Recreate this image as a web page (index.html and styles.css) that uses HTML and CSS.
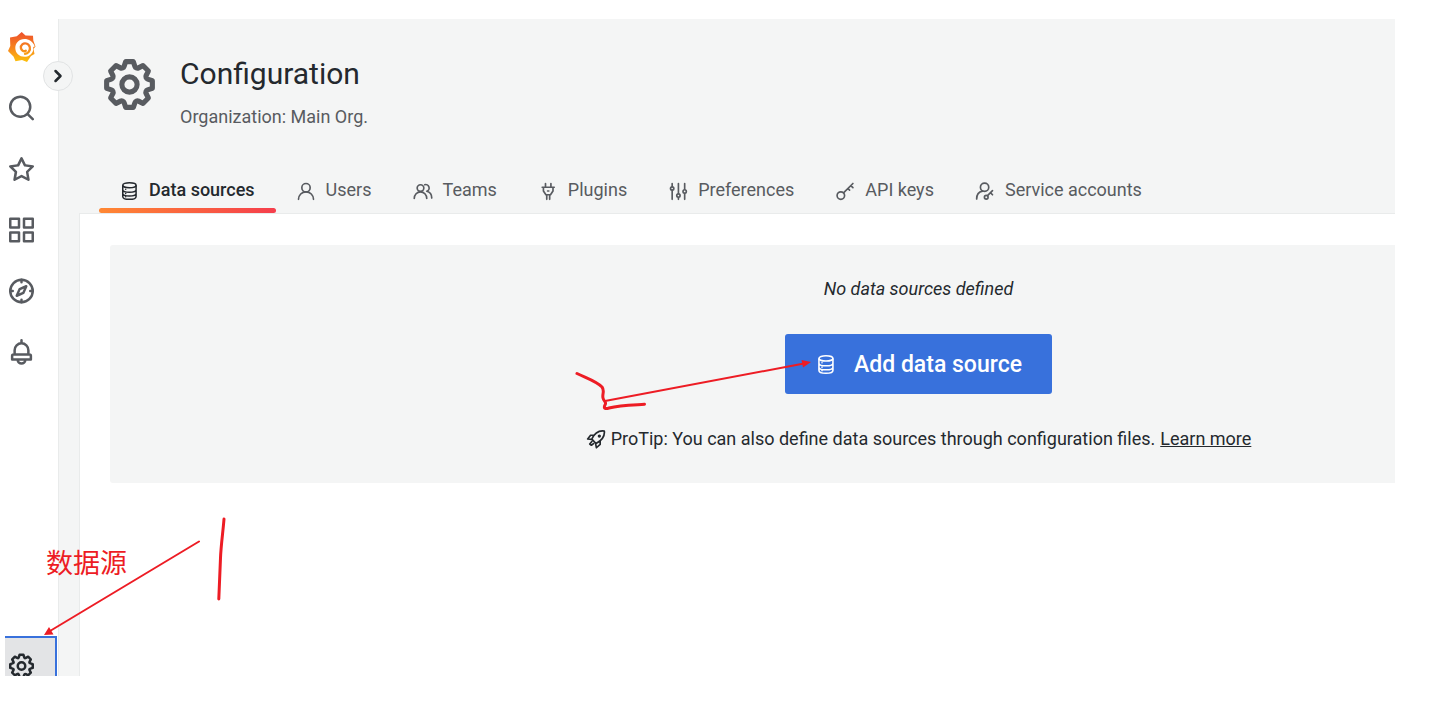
FILE: index.html
```html
<!DOCTYPE html>
<html lang="en">
<head>
<meta charset="utf-8" />
<title>Configuration: Data sources - Grafana</title>
<meta name="viewport" content="width=device-width, initial-scale=1" />
<link rel="stylesheet" href="styles.css">
</head>

<body>
<!-- shared icons -->
<svg class="sprite" aria-hidden="true">
    <symbol id="cog" viewBox="0 0 24 24"><path d="M21.32,9.55l-1.89-.63.89-1.78A1,1,0,0,0,20.13,6L18,3.87a1,1,0,0,0-1.15-.19l-1.78.89-.63-1.89A1,1,0,0,0,13.5,2h-3a1,1,0,0,0-.95.68L8.92,4.57,7.14,3.68A1,1,0,0,0,6,3.87L3.87,6a1,1,0,0,0-.19,1.15l.89,1.78-1.89.63A1,1,0,0,0,2,10.5v3a1,1,0,0,0,.68.95l1.89.63-.89,1.78A1,1,0,0,0,3.87,18L6,20.13a1,1,0,0,0,1.15.19l1.78-.89.63,1.89a1,1,0,0,0,.95.68h3a1,1,0,0,0,.95-.68l.63-1.89,1.78.89A1,1,0,0,0,18,20.13L20.13,18a1,1,0,0,0,.19-1.15l-.89-1.78,1.89-.63A1,1,0,0,0,22,13.5v-3A1,1,0,0,0,21.32,9.55ZM20,12.78l-1.2.4A2,2,0,0,0,17.64,16l.57,1.14-1.1,1.1L16,17.64a2,2,0,0,0-2.79,1.16l-.4,1.2H11.22l-.4-1.2A2,2,0,0,0,8,17.64l-1.14.57-1.1-1.1L6.36,16A2,2,0,0,0,5.2,13.18L4,12.78V11.22l1.2-.4A2,2,0,0,0,6.36,8L5.79,6.89l1.1-1.1L8,6.36A2,2,0,0,0,10.82,5.2l.4-1.2h1.56l.4,1.2A2,2,0,0,0,16,6.36l1.14-.57,1.1,1.1L17.64,8a2,2,0,0,0,1.16,2.79l1.2.4ZM12,8a4,4,0,1,0,4,4A4,4,0,0,0,12,8Zm0,6a2,2,0,1,1,2-2A2,2,0,0,1,12,14Z"/></symbol>
    <symbol id="database" viewBox="0 0 24 24">
        <g fill="none" stroke="currentColor" stroke-width="1.8"><ellipse cx="12.500" cy="5" rx="8" ry="3"/><path d="M4.500 5V18.500C4.500 20.500 8 22 12.500 22S20.500 20.500 20.500 18.500V5M4.500 10.500C4.500 12.300 8 13.500 12.500 13.500S20.500 12.300 20.500 10.500M4.500 15C4.500 16.800 8 18 12.500 18S20.500 16.800 20.500 15"/></g>
        <circle cx="8" cy="10" r=".9"/><circle cx="8" cy="15" r=".9"/><circle cx="8" cy="19" r=".9"/>
    </symbol>
</svg>

<div class="app">
    <nav class="sidebar" aria-label="Main menu">
        <a class="logo" href="#" aria-label="Home">
            <svg viewBox="0 0 30 32" width="30" height="32">
                <defs><linearGradient id="flame" gradientUnits="userSpaceOnUse" x1="0" y1="31" x2="0" y2="1"><stop offset="0" stop-color="#fcc10b"/><stop offset=".45" stop-color="#f7871e"/><stop offset="1" stop-color="#ee4f2c"/></linearGradient></defs>
                <path fill="url(#flame)" d="M15.700 1L19.500 4.500L27 4.800L27.300 9.500L29.500 15.500L27.500 18L28.500 23L25 25L21 31L16 29L9.500 30.300L7.500 25.500L2 20L4.300 15L4 6.500L10.800 5.300Z"/>
                <path fill="#fff" d="M28.800 15.500C26.500 10 22.800 8 18.500 8C13 8 9.300 12 9.300 17C9.300 22 13.200 25.800 18.500 25.800C22.500 25.800 25.500 23.500 26.800 20.500C27.300 19 27.400 17.500 27.200 16Z"/>
                <path fill="none" stroke="url(#flame)" stroke-width="2.300" stroke-linecap="round" d="M19.800 19.800C17.600 21 15.200 19.400 14.900 17C14.500 14 17.300 11.800 20.200 12.500C24 13.400 25 18 22.800 20.800C21.800 22 20.500 22.700 19 22.900"/>
            </svg>
        </a>
        <a class="nav-item" href="#" aria-label="Search dashboards"><svg class="icon" viewBox="0 0 24 24"><path d="M21.710,20.290,18,16.610A9,9,0,1,0,16.610,18l3.680,3.680a1,1,0,0,0,1.420,0A1,1,0,0,0,21.710,20.290ZM11,18a7,7,0,1,1,7-7A7,7,0,0,1,11,18Z"/></svg></a>
        <a class="nav-item" href="#" aria-label="Starred"><svg class="icon" viewBox="0 0 24 24"><path d="M22,9.670A1,1,0,0,0,21.140,9l-5.690-.830L12.900,3a1,1,0,0,0-1.800,0L8.550,8.160,2.860,9a1,1,0,0,0-.810.680,1,1,0,0,0,.250,1l4.130,4-1,5.680A1,1,0,0,0,6.900,21.440L12,18.770l5.100,2.670a.930.930,0,0,0,.460.120,1,1,0,0,0,.590-.190,1,1,0,0,0,.400-1l-1-5.680,4.130-4A1,1,0,0,0,22,9.670Zm-6.150,4a1,1,0,0,0-.290.880l.720,4.200-3.760-2a1.060,1.060,0,0,0-.940,0l-3.760,2,.720-4.200a1,1,0,0,0-.290-.880l-3-3,4.210-.610a1,1,0,0,0,.760-.550L12,5.700l1.880,3.820a1,1,0,0,0,.760.550l4.210.610Z"/></svg></a>
        <a class="nav-item" href="#" aria-label="Dashboards"><svg class="icon line" viewBox="0 0 24 24"><path d="M3 3H10V10H3ZM14 3H21V10H14ZM3 14H10V21H3ZM14 14H21V21H14Z"/></svg></a>
        <a class="nav-item" href="#" aria-label="Explore"><svg class="icon line" viewBox="0 0 24 24"><circle cx="12" cy="12" r="9"/><path d="M12 3V5M12 19V21M3 12H5M19 12H21M15.800 8.200L13.500 13.500L8.200 15.800L10.500 10.500Z"/></svg></a>
        <a class="nav-item" href="#" aria-label="Alerting"><svg class="icon line" viewBox="0 0 24 24"><path d="M12 2.500V5M6.500 14V10.500A5.500 5.500 0 0 1 17.500 10.500V14M5.500 14H18.500A1 1 0 0 1 19.500 15V18H4.500V15A1 1 0 0 1 5.500 14ZM9 18.500A3 2.700 0 0 0 15 18.500"/></svg></a>
        <a class="nav-item nav-config" href="#" aria-label="Configuration"><svg class="icon"><use href="#cog"/></svg></a>
        <button class="toggle" type="button" aria-label="Expand menu"><svg viewBox="0 0 16 16" width="16" height="16"><path d="M5.500 3L10.500 8L5.500 13"/></svg></button>
    </nav>

    <main class="page">
        <header class="page-header">
            <svg class="page-icon"><use href="#cog"/></svg>
            <div>
                <h1>Configuration</h1>
                <p class="subtitle">Organization: Main Org.</p>
            </div>
        </header>

        <nav class="tabs" aria-label="Configuration tabs">
            <a class="tab active" href="#"><svg class="tab-icon"><use href="#database"/></svg>Data sources</a>
            <a class="tab" href="#"><svg class="tab-icon line" viewBox="0 0 24 24"><circle cx="12" cy="8" r="5"/><path d="M3 22A9 9 0 0 1 21 22"/></svg>Users</a>
            <a class="tab" href="#"><svg class="tab-icon line" viewBox="0 0 24 24"><circle cx="9" cy="8.500" r="4"/><path d="M1.500 21A7.500 8 0 0 1 16.500 21M14 4.500A4 4 0 0 1 16.500 12.300C20 13 22.500 16 22.500 20.500"/></svg>Teams</a>
            <a class="tab" href="#"><svg class="tab-icon line" viewBox="0 0 24 24"><path d="M9 3V7.500M15.500 3V7.500M5 7.500H19.500M6.500 7.500V12L9.500 16.500H15L18 12V7.500M10.500 16.500V22M14 16.500V22M11.500 12H13"/></svg>Plugins</a>
            <a class="tab" href="#"><svg class="tab-icon line" viewBox="0 0 24 24"><path d="M5 3V7M5 11V22M12.500 3V15M12.500 20V22M20 3V10M20 15V22"/><circle cx="5" cy="9" r="2"/><circle cx="12.500" cy="17.500" r="2"/><circle cx="20" cy="12.500" r="2"/></svg>Preferences</a>
            <a class="tab" href="#"><svg class="tab-icon line" viewBox="0 0 24 24"><circle cx="7" cy="17.500" r="4.500"/><path d="M10.200 14.300L21.500 3M19 5.500L21.500 8M15.500 9L17.500 11"/></svg>API keys</a>
            <a class="tab" href="#"><svg class="tab-icon line" viewBox="0 0 24 24"><circle cx="11.500" cy="7.500" r="5"/><path d="M2 21.500C2 16.500 5 13 9 12.200M15 17.500L21 11.500M18.500 14L21 16.500"/><circle cx="13.500" cy="19.500" r="2.200"/></svg>Service accounts</a>
        </nav>

        <section class="content">
            <div class="empty">
                <p class="empty-title">No data sources defined</p>
                <button class="add" type="button"><svg class="add-icon"><use href="#database"/></svg>Add data source</button>
                <p class="protip">
                    <svg class="rocket line" viewBox="0 0 24 24"><path d="M22 2.500C15 1.500 10 5.500 7 12L12 17.500C18.500 14 22.800 9.500 22 2.500ZM10 7.500H5.500L2 12L7 12.500M17 14.500V18.500L12.500 22.500L11.500 17.500M7 15L4.500 18L6.500 19.500L9 17.500"/><circle cx="16" cy="8.500" r="1"/></svg>
                    ProTip: You can also define data sources through configuration files. <a href="#">Learn more</a>
                </p>
            </div>
        </section>
    </main>
</div>

<!-- red pen notes over the page -->
<svg class="notes" width="1437" height="703" viewBox="0 0 1437 703" aria-hidden="true">
    <path class="thin" d="M199 541.500L50 631M605 401L804 363.500"/>
    <path class="head" d="M44 635L49 627L53.500 634.500ZM811 362L801.500 360L803 367.500Z"/>
    <path class="pen" d="M224 519C223 532 221 545 220.500 558L218.800 599M577 373.500C586 378 596 381 602 387C605 391 602 394 603 398C604 402 607 402 605 405C603 409 606 409 609 408C620 405 632 405 644.500 404.300"/>
</svg>
<span class="note-text" lang="zh">数据源</span>
</body>
</html>
```
FILE: styles.css
```css
* { box-sizing: border-box; }

body {
    margin: 0;
    background: #fff;
    color: #24292e;
    font-family: Roboto, sans-serif;
    font-size: 18px;
    line-height: 28px;
}

h1, p { margin: 0; }
a { color: inherit; }
svg { fill: currentColor; flex-shrink: 0; }
button { font-family: inherit; cursor: pointer; }

.line { fill: none; stroke: currentColor; stroke-width: 2; stroke-linejoin: round; stroke-linecap: round; }
.sprite { position: absolute; width: 0; height: 0; }

.app {
    display: flex;
    height: 100vh;
    padding: 19px 42px 27px 5px;
}

/* sidebar */
.sidebar {
    position: relative;
    display: flex;
    flex-direction: column;
    width: 54px;
    flex-shrink: 0;
    border-right: 1px solid #e9ebeb;
    color: #585b60;
}
.logo { display: flex; align-items: center; height: 56px; padding-left: 1px; margin-bottom: 2px; }
.nav-item { display: flex; align-items: center; height: 61px; padding-left: 1px; flex-shrink: 0; }
.icon { width: 31px; height: 30px; }
.nav-config {
    height: 40px;
    width: 52px;
    margin-top: auto;
    align-items: flex-start;
    padding-top: 13px;
    overflow: hidden;
    background: #e3e4e6;
    border: solid #3871dc;
    border-width: 2px 2px 0 0;
    color: #24292e;
}
.toggle {
    position: absolute;
    top: 42px;
    right: -15px;
    display: flex;
    align-items: center;
    justify-content: center;
    width: 30px;
    height: 30px;
    padding: 0;
    border: 1px solid #e1e3e4;
    border-radius: 50%;
    background: #f4f5f5;
    color: #24292e;
}
.toggle path { fill: none; stroke: currentColor; stroke-width: 2.500; stroke-linecap: round; stroke-linejoin: round; }

/* page */
.page {
    display: flex;
    flex-direction: column;
    flex: 1;
    min-width: 0;
    overflow: hidden;
    background: #f4f5f5;
}
.page-header { display: flex; gap: 20px; padding: 35px 40px 0; }
.page-icon { width: 61px; height: 61px; color: #585b60; }
h1 { font-size: 30px; font-weight: 400; line-height: 40px; }
.subtitle { margin-top: 9px; color: #585b60; }

.tabs { display: flex; margin: 35px 0 0 40px; }
.tab {
    position: relative;
    display: flex;
    align-items: center;
    gap: 10px;
    height: 47px;
    padding: 0 21px 0 20px;
    color: #585b60;
    text-decoration: none;
    white-space: nowrap;
}
.tab-icon { width: 20px; height: 20px; margin-top: 3px; }
.tab.active { color: #24292e; font-weight: 500; }
.tab.active::after {
    content: "";
    position: absolute;
    left: 0;
    right: 0;
    bottom: 0;
    height: 5px;
    border-radius: 3px;
    background: linear-gradient(90deg, #ff8833, #f53e4c);
}

.content {
    flex: 1;
    margin-left: 20px;
    padding: 31px 0 0 30px;
    border: solid #e9ebeb;
    border-width: 1px 0 0 1px;
    background: #fff;
    overflow: hidden;
}
/* the card runs on past the right edge */
.empty {
    display: flex;
    flex-direction: column;
    align-items: center;
    margin-right: -332px;
    padding: 30px;
    border-radius: 3px;
    background: #f4f5f5;
}
.empty-title { font-style: italic; }
.add {
    display: flex;
    align-items: center;
    gap: 18px;
    height: 60px;
    margin: 31px 0;
    padding: 0 30px;
    border: 0;
    border-radius: 3px;
    background: #3871dc;
    color: #fff;
    font-size: 23px;
    font-weight: 500;
}
.add-icon { width: 21px; height: 21px; }
.protip { display: flex; align-items: center; gap: 5px; white-space: nowrap; }
.rocket { width: 20px; height: 20px; }

/* notes */
.notes { position: absolute; top: 0; left: 0; pointer-events: none; }
.notes path { fill: none; stroke: #ed1c24; stroke-linecap: round; stroke-linejoin: round; }
.notes .thin { stroke-width: 2; }
.notes .pen { stroke-width: 3; }
.notes .head { fill: #ed1c24; stroke: none; }
.note-text {
    position: absolute;
    top: 542px;
    left: 46px;
    color: #ed1c24;
    font-family: "Noto Sans CJK SC", sans-serif;
    font-size: 27px;
    line-height: 40px;
}
```
